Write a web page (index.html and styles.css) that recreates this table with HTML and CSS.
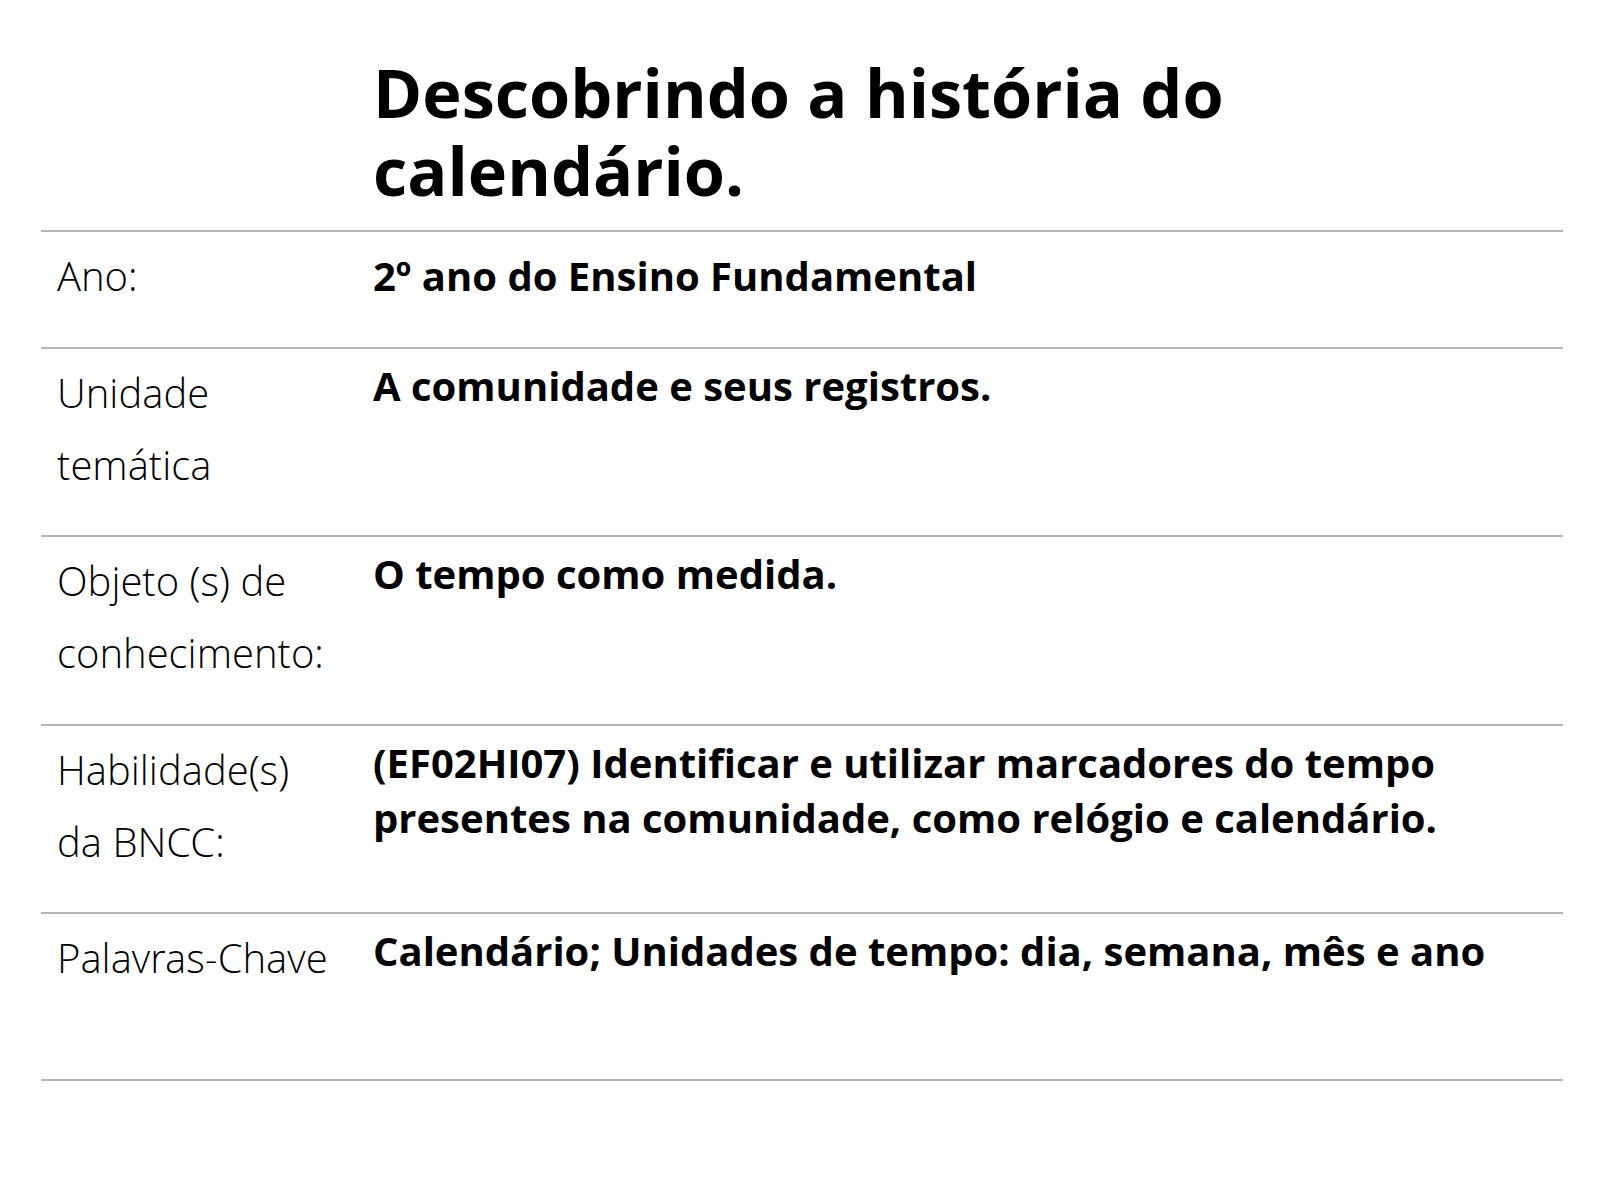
FILE: index.html
```html
<!DOCTYPE html>
<html lang="pt-BR">
<head>
<meta charset="utf-8">
<title>Descobrindo a história do calendário.</title>
<link rel="stylesheet" href="styles.css">
</head>
<body>
<main class="plan">
  <header class="plan-head">
    <div class="spacer"></div>
    <h1 class="title">Descobrindo a história do calendário.</h1>
  </header>
  <section class="row row-first">
    <div class="label">Ano:</div>
    <div class="value value-tall">2º ano do Ensino Fundamental</div>
  </section>
  <section class="row">
    <div class="label">Unidade<br>temática</div>
    <div class="value">A comunidade e seus registros.</div>
  </section>
  <section class="row">
    <div class="label">Objeto (s) de<br>conhecimento:</div>
    <div class="value">O tempo como medida.</div>
  </section>
  <section class="row">
    <div class="label">Habilidade(s)<br>da BNCC:</div>
    <div class="value">(EF02HI07) Identificar e utilizar marcadores do tempo presentes na comunidade, como relógio e calendário.</div>
  </section>
  <section class="row row-last">
    <div class="label">Palavras-Chave</div>
    <div class="value">Calendário; Unidades de tempo: dia, semana, mês e ano</div>
  </section>
</main>
</body>
</html>
```
FILE: styles.css
```css
html, body {
  margin: 0;
  padding: 0;
  background: #ffffff;
}

body {
  font-family: "Open Sans", "Liberation Sans", sans-serif;
  color: #000;
}

.plan {
  margin-left: 41px;
  width: 1522px;
}

.plan-head {
  display: grid;
  grid-template-columns: 332px 1fr;
  padding-top: 54px;
  padding-bottom: 20px;
}

.title {
  margin: 0;
  font-size: 66.6px;
  line-height: 78px;
  font-weight: 700;
  max-width: 900px;
}

.row {
  display: grid;
  grid-template-columns: 332px 1fr;
  border-top: 2px solid #b4b4b4;
  padding-top: 8px;
  padding-bottom: 34.6px;
}

.row-last {
  border-bottom: 2px solid #b4b4b4;
  padding-bottom: 85px;
}

.label {
  padding-left: 16px;
  font-family: "Open Sans Light", "Open Sans", "Liberation Sans", sans-serif;
  font-size: 40px;
  line-height: 72px;
  font-weight: 300;
  color: #000;
}

.value {
  padding-top: 1px;
  font-size: 40px;
  line-height: 55px;
  font-weight: 700;
  padding-right: 60px;
}

.value-tall {
  line-height: 72px;
  padding-top: 0;
}
```
